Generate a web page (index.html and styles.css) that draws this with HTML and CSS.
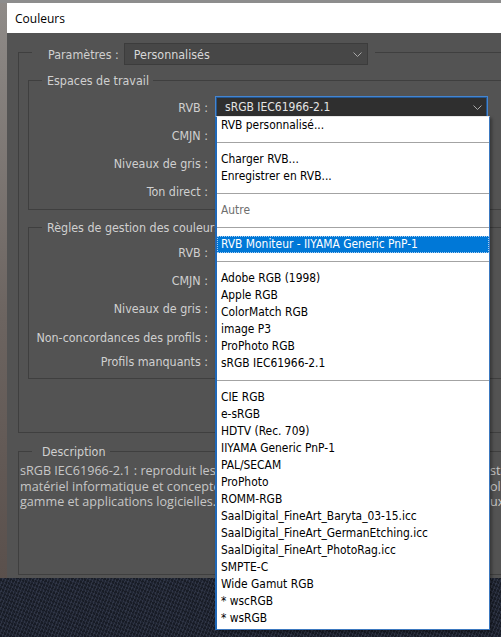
FILE: index.html
```html
<!DOCTYPE html>
<html lang="fr">
<head>
<meta charset="utf-8">
<title>Couleurs</title>
<link rel="stylesheet" href="styles.css">
</head>
<body>
<div class="desk">
  <div class="win">
    <div class="titlebar">Couleurs</div>
    <div class="dlg">
      <div class="grp">
        <div class="ghead ghead-tall">
          <span class="plabel">Paramètres :</span>
          <div class="sel sel-param"><span>Personnalisés</span><svg class="chev" width="9" height="5" viewBox="0 0 9 5"><path d="M0.5 0.5 L4.5 4.5 L8.5 0.5" fill="none" stroke="#a8a8a8"/></svg></div>
        </div>
        <div class="gbox outer-box">
          <div class="grp">
            <div class="ghead"><span class="glabel">Espaces de travail</span></div>
            <div class="gbox work-box">
              <div class="row"><span class="lbl">RVB :</span><div class="sel sel-focus"><span>sRGB IEC61966-2.1</span><svg class="chev" width="9" height="5" viewBox="0 0 9 5"><path d="M0.5 0.5 L4.5 4.5 L8.5 0.5" fill="none" stroke="#a8a8a8"/></svg></div></div>
              <div class="row"><span class="lbl">CMJN :</span><div class="sel sel-norm"><span>U.S. Web Coated (SWOP) v2</span></div></div>
              <div class="row"><span class="lbl">Niveaux de gris :</span><div class="sel sel-norm"><span>Dot Gain 20%</span></div></div>
              <div class="row"><span class="lbl">Ton direct :</span><div class="sel sel-norm"><span>Dot Gain 20%</span></div></div>
            </div>
          </div>
          <div class="grp grp-rules">
            <div class="ghead"><span class="glabel">Règles de gestion des couleurs</span></div>
            <div class="gbox rules-box">
              <div class="row"><span class="lbl">RVB :</span><div class="sel sel-norm"><span>Conserver les profils incorporés</span></div></div>
              <div class="row"><span class="lbl">CMJN :</span><div class="sel sel-norm"><span>Conserver les profils incorporés</span></div></div>
              <div class="row"><span class="lbl">Niveaux de gris :</span><div class="sel sel-norm"><span>Conserver les profils incorporés</span></div></div>
              <div class="row row-check row-first-check"><span class="lbl">Non-concordances des profils :</span><span class="chk">Demander à l'ouverture</span></div>
              <div class="row row-check"><span class="lbl">Profils manquants :</span><span class="chk">Demander à l'ouverture</span></div>
            </div>
          </div>
        </div>
      </div>
      <div class="grp grp-desc">
        <div class="ghead"><span class="glabel dlabel">Description</span></div>
        <div class="gbox desc-box">
          <div class="dline"><span class="dl">sRGB IEC61966-2.1 : reproduit les caractéristiques d'un moniteur PC standard. Cet espace</span><span class="dr">standard est approuvé par de nombreux fabricants de</span></div>
          <div class="dline"><span class="dl">matériel informatique et concepteurs de logiciels, et est devenu l'espace c</span><span class="dr">olorimétrique par défaut pour de nombreux scanners,</span></div>
          <div class="dline"><span class="dl">gamme et applications logicielles. Idéal pour le Web, mais à éviter pour les trava</span><span class="dr">ux de prépresse.</span></div>
        </div>
      </div>
    </div>
  </div>

  <ul class="menu">
    <li>RVB personnalisé...</li>
    <li class="sep"></li>
    <li>Charger RVB...</li>
    <li>Enregistrer en RVB...</li>
    <li class="sep"></li>
    <li class="dis">Autre</li>
    <li class="sep"></li>
    <li class="hl">RVB Moniteur - IIYAMA Generic PnP-1</li>
    <li class="sep"></li>
    <li>Adobe RGB (1998)</li>
    <li>Apple RGB</li>
    <li>ColorMatch RGB</li>
    <li>image P3</li>
    <li>ProPhoto RGB</li>
    <li>sRGB IEC61966-2.1</li>
    <li class="sep"></li>
    <li>CIE RGB</li>
    <li>e-sRGB</li>
    <li>HDTV (Rec. 709)</li>
    <li>IIYAMA Generic PnP-1</li>
    <li>PAL/SECAM</li>
    <li>ProPhoto</li>
    <li>ROMM-RGB</li>
    <li>SaalDigital_FineArt_Baryta_03-15.icc</li>
    <li>SaalDigital_FineArt_GermanEtching.icc</li>
    <li>SaalDigital_FineArt_PhotoRag.icc</li>
    <li>SMPTE-C</li>
    <li>Wide Gamut RGB</li>
    <li>* wscRGB</li>
    <li>* wsRGB</li>
  </ul>
</div>
</body>
</html>
```

FILE: styles.css
```css
:root {
  --ln: #3f3f3f;
  --ui: "DejaVu Sans Condensed", "DejaVu Sans", sans-serif;
  --lt: #d0d0d0;
}
html, body {
  margin: 0;
  padding: 0;
}
body {
  width: 501px;
  height: 637px;
  overflow: hidden;
}
.desk {
  position: relative;
  width: 501px;
  height: 637px;
  overflow: hidden;
  padding-top: 3px;
  box-sizing: border-box;
  background:
    linear-gradient(#8d8d8d, #8d8d8d) left top / 100% 3px no-repeat,
    linear-gradient(to bottom, #8f8b88, #6c6460 55%, #5a504c) left top / 7px 578px no-repeat,
    repeating-linear-gradient(112deg, rgba(120, 130, 160, 0.18) 0 1px, rgba(0, 0, 0, 0) 1px 3px),
    repeating-linear-gradient(22deg, rgba(0, 0, 0, 0.25) 0 2px, rgba(0, 0, 0, 0) 2px 4px),
    linear-gradient(to bottom, #2d3344, #1f2431);
}
.win {
  margin-left: 7px;
  width: 620px;
}
.titlebar {
  height: 30px;
  background: #ffffff;
  display: flex;
  align-items: center;
  padding-left: 8px;
  font-family: "Open Sans", "Noto Sans", sans-serif;
  font-size: 12px;
  color: #000;
}
.dlg {
  background: #535353;
  padding: 10px 20px 3px 11px;
  font-family: var(--ui);
  font-size: 12.4px;
  color: var(--lt);
}
.ghead {
  display: flex;
  align-items: center;
  height: 16px;
}
.ghead::before {
  content: "";
  align-self: flex-end;
  width: 13px;
  height: 7px;
  border-left: 1px solid var(--ln);
  border-top: 1px solid var(--ln);
}
.ghead::after {
  content: "";
  flex: 1;
  align-self: flex-start;
  margin-top: 8px;
  border-top: 1px solid var(--ln);
}
.ghead-tall {
  height: 22px;
}
.ghead-tall::before {
  height: 12px;
}
.ghead-tall::after {
  margin-top: 9px;
}
.glabel {
  padding: 0 4px 0 5px;
  color: var(--lt);
  white-space: nowrap;
}
.dlabel {
  padding: 0 4px 0 10px;
}
.plabel {
  margin-left: 16px;
  margin-right: 5px;
  white-space: nowrap;
}
.gbox {
  border-left: 1px solid var(--ln);
  border-right: 1px solid var(--ln);
  border-bottom: 1px solid var(--ln);
}
.outer-box {
  padding: 7px 20px 53px 9px;
}
.work-box {
  padding: 5px 0 4px;
}
.grp-rules {
  margin-top: 9px;
}
.rules-box {
  padding: 3px 0 5px;
}
.row {
  display: flex;
  align-items: center;
  height: 28px;
}
.row-check {
  height: 24px;
}
.row-first-check {
  margin-top: 3px;
}
.lbl {
  width: 179px;
  margin-right: 7px;
  text-align: right;
  white-space: nowrap;
}
.sel {
  box-sizing: border-box;
  height: 22px;
  display: flex;
  align-items: center;
  justify-content: space-between;
  padding: 0 5px 0 9px;
  white-space: nowrap;
}
.sel-param {
  width: 244px;
  background: #474747;
  border: 1px solid #3c3c3c;
  color: #d8d8d8;
  margin-right: 7px;
}
.sel-focus {
  width: 273px;
  background: #2f2f2f;
  border: 1px solid #4585d0;
  box-shadow: inset 0 0 0 1px #22558f;
  color: #e4e4e4;
  font-size: 12px;
}
.sel-norm {
  width: 273px;
  background: #474747;
  border: 1px solid #3c3c3c;
}
.chev {
  display: block;
  flex: none;
}
.chk {
  white-space: nowrap;
}
.grp-desc {
  margin-top: 10px;
}
.desc-box {
  height: 111px;
  padding: 4px 0 0 1px;
  font-family: "Open Sans", "Noto Sans", sans-serif;
  font-size: 12.6px;
  line-height: 15.5px;
  color: #c6c6c6;
  overflow: hidden;
}
.dline {
  display: flex;
  white-space: nowrap;
}
.dl {
  flex: none;
  width: 470px;
  overflow: hidden;
}
.dr {
  flex: none;
}
.menu {
  position: absolute;
  left: 215px;
  top: 116px;
  width: 275px;
  box-sizing: border-box;
  margin: 0;
  padding: 0 0 2px;
  list-style: none;
  background: #ffffff;
  border: 1px solid #3b78bf;
  border-left: 2px solid #1f68b8;
  border-top: 1px solid #e8e8e8;
  box-shadow: 2px 2px 3px rgba(0, 0, 0, 0.35);
  font-family: var(--ui);
  font-size: 11.9px;
  color: #000;
}
.menu li {
  height: 17px;
  line-height: 17px;
  padding-left: 4px;
  white-space: nowrap;
}
.menu li.sep {
  padding-left: 0;
  display: flex;
  align-items: center;
}
.menu li.sep::after {
  content: "";
  flex: 1;
  border-top: 1px solid #a3a3a3;
}
.menu li.dis {
  color: #6e6e6e;
}
.menu li.hl {
  background: #0078d7;
  color: #ffffff;
  outline: 1px dotted #a9cdf0;
  outline-offset: -1px;
}
```
